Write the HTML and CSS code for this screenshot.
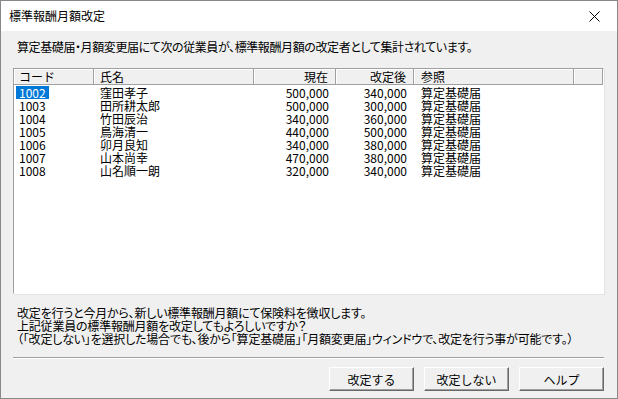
FILE: index.html
```html
<!DOCTYPE html>
<html lang="ja">
<head>
  <meta charset="UTF-8" />
  <title>標準報酬月額改定</title>
  <link rel="stylesheet" href="styles.css">
</head>
<body>
  <div class="window">
    <div class="titlebar">
      <span class="title">標準報酬月額改定</span>
      <button class="close" aria-label="閉じる">
        <svg width="11" height="11" viewBox="0 0 11 11"><path d="M0.5 0.5 L10.5 10.5 M10.5 0.5 L0.5 10.5" stroke="#000" stroke-width="1" fill="none"/></svg>
      </button>
    </div>

    <div class="content">
      <p class="message">算定基礎届・月額変更届にて次の従業員が、標準報酬月額の改定者として集計されています。</p>

      <div class="listbox">
        <div class="row header">
          <div class="cell code">コード</div>
          <div class="cell name">氏名</div>
          <div class="cell num">現在</div>
          <div class="cell num">改定後</div>
          <div class="cell ref">参照</div>
          <div class="cell"></div>
        </div>
        <div class="rows" id="rows"></div>
      </div>

      <div class="notice">
        <p>改定を行うと今月から、新しい標準報酬月額にて保険料を徴収します。</p>
        <p>上記従業員の標準報酬月額を改定してもよろしいですか？</p>
        <p>（「改定しない」を選択した場合でも、後から「算定基礎届」「月額変更届」ウィンドウで、改定を行う事が可能です。）</p>
      </div>

      <div class="separator"></div>

      <div class="buttons">
        <button class="btn default">改定する</button>
        <button class="btn">改定しない</button>
        <button class="btn">ヘルプ</button>
      </div>
    </div>
  </div>

  <script>
    const employees = [
      { code: "1002", name: "窪田孝子", now: "500,000", after: "340,000", ref: "算定基礎届" },
      { code: "1003", name: "田所耕太郎", now: "500,000", after: "300,000", ref: "算定基礎届" },
      { code: "1004", name: "竹田辰治", now: "340,000", after: "360,000", ref: "算定基礎届" },
      { code: "1005", name: "鳥海清一", now: "440,000", after: "500,000", ref: "算定基礎届" },
      { code: "1006", name: "卯月良知", now: "340,000", after: "380,000", ref: "算定基礎届" },
      { code: "1007", name: "山本尚幸", now: "470,000", after: "380,000", ref: "算定基礎届" },
      { code: "1008", name: "山名順一朗", now: "320,000", after: "340,000", ref: "算定基礎届" }
    ];

    const rows = document.getElementById("rows");

    employees.forEach((e, i) => {
      const row = document.createElement("div");
      row.className = "row";
      row.innerHTML = `
        <div class="cell code"><span class="${i === 0 ? "selected" : ""}">${e.code}</span></div>
        <div class="cell name">${e.name}</div>
        <div class="cell num">${e.now}</div>
        <div class="cell num">${e.after}</div>
        <div class="cell ref">${e.ref}</div>
        <div class="cell"></div>
      `;
      rows.appendChild(row);
    });
  </script>
</body>
</html>
```

FILE: styles.css
```css
html, body {
  margin: 0;
  padding: 0;
}

body {
  font-family: "Noto Sans CJK JP", "Noto Sans", sans-serif;
  font-size: 12px;
  color: #000;
  background: #f0f0f0;
}

p {
  margin: 0;
}

.window {
  width: 618px;
  height: 399px;
  box-sizing: border-box;
  border: 1px solid #888;
  background: #f0f0f0;
  display: flex;
  flex-direction: column;
}

.titlebar {
  height: 30px;
  background: #fff;
  display: flex;
  align-items: center;
  justify-content: space-between;
  padding-left: 8px;
  flex-shrink: 0;
}

.title {
  font-size: 12px;
  line-height: 14px;
  margin-top: -1px;
}

.close {
  width: 46px;
  height: 30px;
  border: none;
  background: transparent;
  padding: 0;
  display: flex;
  align-items: center;
  justify-content: center;
}

.content {
  padding: 10px 13px 0 12px;
  display: flex;
  flex-direction: column;
}

.message {
  line-height: 12px;
  padding-left: 4px;
  font-feature-settings: "palt";
  letter-spacing: -0.4px;
}

.listbox {
  margin-top: 15px;
  height: 226px;
  box-sizing: border-box;
  background: #fff;
  border-top: 1px solid #a0a0a0;
  border-left: 1px solid #a0a0a0;
  border-right: 1px solid #fff;
  border-bottom: 1px solid #fff;
  box-shadow: 1px 1px 0 #e3e3e3;
}

.row {
  display: grid;
  grid-template-columns: 80px 160px 82px 78px 160px 1fr;
  height: 13px;
  line-height: 13px;
}

.row.header {
  height: 16px;
  line-height: 15px;
  background: #f0f0f0;
  margin-bottom: 1px;
}

.header .cell {
  border-right: 1px solid #a0a0a0;
  border-bottom: 1px solid #a0a0a0;
  box-shadow: inset 1px 1px 0 #fff;
}

.cell {
  white-space: nowrap;
}

.cell.code {
  padding-left: 2px;
}

.header .cell.code {
  padding-left: 5px;
}

.cell.code span {
  padding: 0 3px;
  display: inline-block;
}

.cell.code .selected {
  background: #0078d7;
  color: #fff;
}

.cell.name {
  padding-left: 6px;
}

.cell.num {
  text-align: right;
  padding-right: 7px;
}

.cell.ref {
  padding-left: 7px;
}

.notice {
  margin-top: 12px;
  padding-left: 4px;
  line-height: 13px;
  font-feature-settings: "palt";
  letter-spacing: -0.2px;
}

.separator {
  margin-top: 12px;
  height: 1px;
  background: #a0a0a0;
  border-bottom: 1px solid #fff;
}

.buttons {
  margin-top: 8px;
  display: flex;
  justify-content: flex-end;
  gap: 10px;
}

.btn {
  width: 85px;
  height: 24px;
  padding: 0;
  font-family: inherit;
  font-size: 12px;
  color: #000;
  background: #f0f0f0;
  border-top: 1px solid #fff;
  border-left: 1px solid #fff;
  border-right: 1px solid #696969;
  border-bottom: 1px solid #696969;
  box-shadow: inset -1px -1px 0 #a0a0a0;
}
```
